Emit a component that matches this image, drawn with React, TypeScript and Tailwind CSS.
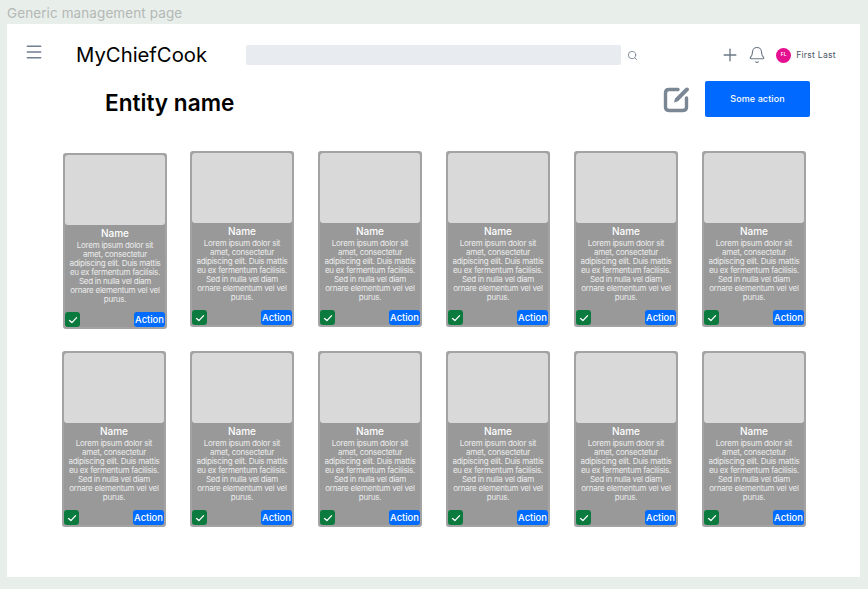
import { Bell, Menu, Plus, Search } from "lucide-react";

const LOREM =
  "Lorem ipsum dolor sit amet, consectetur adipiscing elit. Duis mattis eu ex fermentum facilisis. Sed in nulla vel diam ornare elementum vel vel purus.";

function EntityCard({ className = "" }: { className?: string }) {
  return (
    <div
      className={`flex h-[176px] w-[104px] flex-col rounded-[3px] border-2 border-[#a3a3a3] bg-[#999999] ${className}`}
    >
      <div className="h-[70px] shrink-0 rounded-[3px] bg-[#d9d9d9]" />
      <h3 className="mt-px text-center text-[10px] leading-[14px] font-medium text-white">
        Name
      </h3>
      <p className="mt-px px-[3px] text-center text-[8px] leading-[9px] tracking-[-0.25px] text-[#ececec]">
        {LOREM}
      </p>
      <div className="mt-auto flex items-end justify-between">
        <span className="flex h-[15px] w-[15px] items-center justify-center rounded-[3px] bg-[#0b7a3e]">
          <svg width="10" height="10" viewBox="0 0 10 10" fill="none">
            <path
              d="M1.5 5.4 L3.9 7.6 L8.6 2.6"
              stroke="white"
              strokeWidth="1.3"
              strokeLinecap="round"
              strokeLinejoin="round"
            />
          </svg>
        </span>
        <button className="h-[15px] w-[31px] rounded-[3px] bg-[#006cff] text-center text-[9.4px] leading-[15px] font-medium text-white">
          Action
        </button>
      </div>
    </div>
  );
}

function EditIcon() {
  return (
    <svg width="28" height="28" viewBox="0 0 28 28" fill="none">
      <path
        d="M15 4.5 H6 C3.8 4.5 2.5 5.8 2.5 8 V22 C2.5 24.2 3.8 25.5 6 25.5 H20 C22.2 25.5 23.5 24.2 23.5 22 V13"
        stroke="#7b8794"
        strokeWidth="3.4"
        strokeLinecap="round"
      />
      <path
        d="M11 17.5 L12 13.5 L22.5 3 C23.4 2.2 24.6 2.2 25.4 3 C26.2 3.8 26.2 5 25.4 5.8 L15 16.3 Z"
        fill="#7b8794"
      />
    </svg>
  );
}

export default function App() {
  return (
    <div className="h-[589px] w-[868px] overflow-hidden bg-[#e8eeea] font-['Inter',sans-serif]">
      <div className="h-6 pt-[6px] pl-[7px] text-[13.5px] leading-[15px] tracking-[0.1px] text-[#b4b8b6]">
        Generic management page
      </div>
      <main className="mx-[7px] h-[553px] w-[853px] bg-white">
        <header className="flex h-[57px] items-center pt-[5px]">
          <Menu className="-mt-[6px] ml-[17px] text-[#6f7f92]" size={20} strokeWidth={1.8} />
          <span className="ml-[32px] text-[20.3px] leading-7 text-black">MyChiefCook</span>
          <div className="ml-[39px] h-[20px] w-[375px] rounded-[2px] bg-[#e8ebef]" />
          <Search className="ml-[6px] text-[#7b8794]" size={11} strokeWidth={2} />
          <Plus className="ml-[82px] text-[#6b7785]" size={20} strokeWidth={1.6} />
          <Bell className="ml-[8px] text-[#6b7785]" size={18} strokeWidth={1.5} />
          <span className="ml-[10px] flex h-[15px] w-[15px] items-center justify-center rounded-full bg-[#e5108f] text-[5px] font-medium text-white">
            FL
          </span>
          <span className="ml-[5px] text-[8.6px] tracking-[0.25px] text-[#4b5563]">First Last</span>
        </header>
        <section className="flex h-[36px] items-center">
          <h1 className="mt-2 ml-[98px] text-[22.6px] leading-8 font-semibold text-black">
            Entity name
          </h1>
          <span className="ml-auto">
            <EditIcon />
          </span>
          <button className="mr-[50px] ml-[14px] h-[36px] w-[105px] rounded-[2px] bg-[#0069ff] text-[9px] font-medium tracking-[0.1px] text-white">
            Some action
          </button>
        </section>
        <div className="mt-[34px] ml-[55px] grid grid-cols-[repeat(6,104px)] gap-x-[24px] gap-y-[24px]">
          <EntityCard className="mt-[2px] -mb-[2px] ml-px" />
          <EntityCard />
          <EntityCard />
          <EntityCard />
          <EntityCard />
          <EntityCard />
          <EntityCard />
          <EntityCard />
          <EntityCard />
          <EntityCard />
          <EntityCard />
          <EntityCard />
        </div>
      </main>
    </div>
  );
}
